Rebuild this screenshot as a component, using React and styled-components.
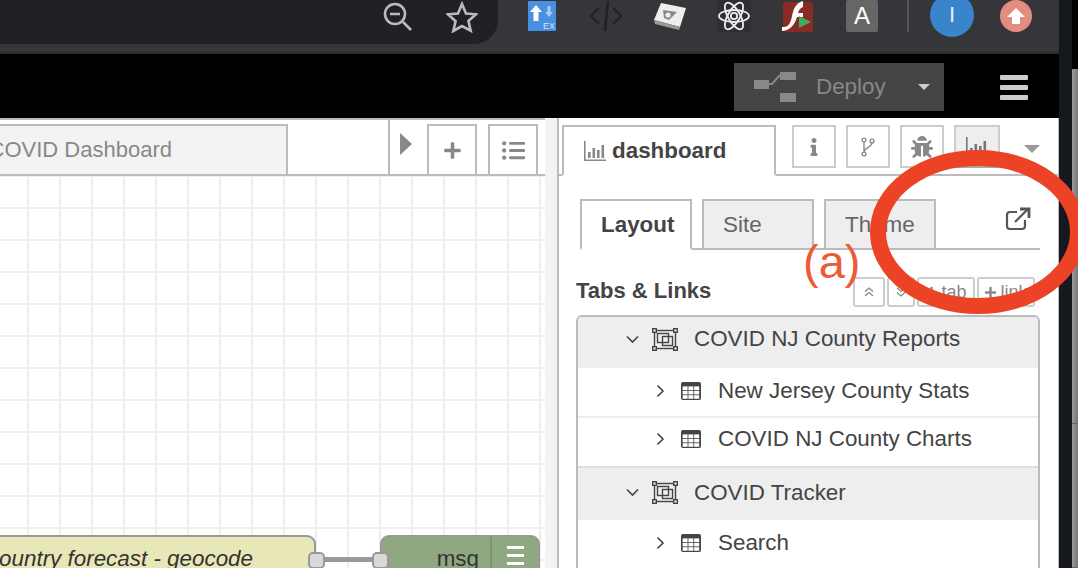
import React from 'react'
import styled, { createGlobalStyle } from 'styled-components'
import { FaPlus, FaListUl, FaInfo, FaBug } from 'react-icons/fa'

const GlobalStyle = createGlobalStyle`
  html, body { margin: 0; padding: 0; background: #15181d; }
  * { box-sizing: border-box; }
`

const Page = styled.div`
  position: relative;
  width: 1078px;
  height: 568px;
  overflow: hidden;
  display: flex;
  background: #15181d;
  font-family: "Liberation Sans", Arial, sans-serif;
`
const Window = styled.div`
  width: 1059px;
  height: 568px;
  flex: none;
  display: flex;
  flex-direction: column;
`
const WindowGap = styled.div`
  width: 13px;
  flex: none;
  background: #15181d;
`
const ScrollEdge = styled.div`
  flex: 1;
  display: flex;
  flex-direction: column;
  padding-top: 69px;
  background: #000;
`
const ScrollThumb = styled.div`
  height: ${p => p.$height}px;
  flex: none;
  border-bottom: 1px solid #666;
  background: linear-gradient(90deg, #9a9a9a, #777);
`

/* browser bar */
const ChromeBar = styled.div`
  height: 54px;
  flex: none;
  display: flex;
  align-items: flex-start;
  background: #35363a;
  border-bottom: 2px solid #2a2b2e;
  overflow: hidden;
`
const UrlPill = styled.div`
  width: 498px;
  height: 44px;
  flex: none;
  display: flex;
  justify-content: flex-end;
  gap: 32px;
  padding: 1px 20px 0 0;
  background: #202124;
  border-radius: 0 0 24px 0;
`
const PillIcon = styled.svg`
  width: 32px;
  height: 32px;
`
const ExtGroup = styled.div`
  margin-left: 12px;
  display: flex;
`
const ExtSlot = styled.div`
  width: 64px;
  height: 32px;
  display: flex;
  justify-content: center;
`
const ExtIcon = styled.svg`
  width: 34px;
  height: 34px;
`
const ExtLetter = styled.div`
  width: 32px;
  height: 32px;
  display: flex;
  align-items: center;
  justify-content: center;
  background: #666;
  border-radius: 2px;
  color: #fff;
  font-size: 24px;
`
const ChromeRule = styled.div`
  width: 2px;
  height: 32px;
  margin-left: 13px;
  background: #55565a;
`
const Avatar = styled.div`
  width: 44px;
  height: 44px;
  margin: -7px 0 0 21px;
  display: flex;
  align-items: center;
  justify-content: center;
  border-radius: 50%;
  background: #3a84cb;
  color: #e8f0f8;
  font-size: 22px;
`
const UpdateBadge = styled.div`
  width: 32px;
  height: 32px;
  margin-left: 26px;
  display: flex;
  align-items: center;
  justify-content: center;
  border-radius: 50%;
  background: #e38d80;
`

/* node-red header */
const Header = styled.div`
  height: 64px;
  flex: none;
  display: flex;
  align-items: center;
  justify-content: flex-end;
  padding-right: 31px;
  background: #000;
`
const Deploy = styled.div`
  width: 210px;
  height: 48px;
  margin: 2px 56px 0 0;
  display: flex;
  align-items: center;
  padding-left: 20px;
  background: #444;
  color: #888;
  font-size: 22.4px;
`
const DeployLabel = styled.span`
  margin-left: 20px;
  flex: 1;
`
const Caret = styled.span`
  display: block;
  width: 0;
  height: 0;
  margin-right: ${p => p.$right || 0}px;
  border-left: ${p => p.$size}px solid transparent;
  border-right: ${p => p.$size}px solid transparent;
  border-top: ${p => p.$size}px solid ${p => p.$color};
`
const Hamburger = styled.div`
  width: 28px;
  display: flex;
  flex-direction: column;
  gap: 5px;
  margin-top: 2px;
`
const HamburgerBar = styled.div`
  height: 5px;
  border-radius: 1px;
  background: #ccc;
`

/* body */
const Body = styled.div`
  flex: 1;
  display: flex;
  min-height: 0;
`
const Workspace = styled.div`
  position: relative;
  width: 545px;
  flex: none;
  display: flex;
  flex-direction: column;
  overflow: hidden;
  background: #fff;
`
const TabBar = styled.div`
  height: 58px;
  flex: none;
  display: flex;
  align-items: flex-end;
  background: #fff;
  border-top: 2px solid #bbb;
  border-bottom: 2px solid #bbb;
  padding-right: 7px;
`
const FlowTab = styled.div`
  width: 288px;
  height: 52px;
  margin-bottom: -2px;
  display: flex;
  align-items: center;
  justify-content: flex-end;
  padding: 0 114px 0 0;
  background: #f3f3f3;
  border: 2px solid #bbb;
  border-left: none;
  color: #888;
  font-size: 22px;
  white-space: nowrap;
  overflow: hidden;
`
const TabSpacer = styled.div`
  flex: 1;
`
const ScrollArrow = styled.div`
  width: 39px;
  height: 56px;
  display: flex;
  padding: 15px 0 0 10px;
  border-left: 2px solid #bbb;
`
const ArrowShape = styled.span`
  width: 0;
  height: 0;
  border-top: 11px solid transparent;
  border-bottom: 11px solid transparent;
  border-left: 12px solid #888;
`
const BarButton = styled.div`
  width: 50px;
  height: 50px;
  margin-right: ${p => p.$gap || 0}px;
  display: flex;
  align-items: center;
  justify-content: center;
  background: #fff;
  border: 2px solid #bbb;
  border-bottom: none;
  color: #888;
  font-size: 19px;
`
const Grid = styled.div`
  flex: 1;
  background-color: #fff;
  background-image:
    linear-gradient(#eee 2px, transparent 2px),
    linear-gradient(90deg, #eee 2px, transparent 2px);
  background-size: 32px 32px;
  background-position: 0 31px, 27px 0;
`

/* nodes sit on the flow canvas */
const Node = styled.div`
  position: absolute;
  top: 417px;
  left: ${p => p.$left}px;
  width: ${p => p.$width}px;
  height: 60px;
  display: flex;
  background: ${p => p.$bg};
  border: 2px solid #999;
  border-radius: 9px;
  color: #333;
  font-size: 22.4px;
`
const NodeText = styled.div`
  flex: 1;
  padding: 9px ${p => p.$right}px 0 0;
  text-align: right;
  font-style: ${p => (p.$italic ? 'italic' : 'normal')};
  white-space: nowrap;
`
const NodeButton = styled.div`
  width: 48px;
  flex: none;
  display: flex;
  flex-direction: column;
  align-items: center;
  gap: 5px;
  padding-top: 9px;
  border-left: 2px solid #7d9472;
`
const NodeButtonBar = styled.div`
  width: 17px;
  height: 3px;
  background: #fff;
`
const Port = styled.div`
  position: absolute;
  top: 434px;
  left: ${p => p.$left}px;
  width: 17px;
  height: 17px;
  background: #d9d9d9;
  border: 2px solid #999;
  border-radius: 5px;
`
const Wire = styled.div`
  position: absolute;
  top: 439px;
  left: 325px;
  width: 48px;
  height: 5px;
  background: #999;
`

const Gutter = styled.div`
  width: 12px;
  flex: none;
  background: #f3f3f3;
`

/* sidebar */
const Sidebar = styled.div`
  flex: 1;
  display: flex;
  flex-direction: column;
  min-width: 0;
  background: #fff;
  border-left: 2px solid #bbb;
  border-right: 1px solid #bbb;
  color: #444;
`
const SideTabs = styled.div`
  height: 58px;
  flex: none;
  display: flex;
  align-items: flex-end;
  padding-left: 3px;
  border-bottom: 2px solid #bbb;
`
const DashTab = styled.div`
  width: 214px;
  height: 51px;
  margin-bottom: -2px;
  display: flex;
  align-items: center;
  gap: 5px;
  padding-left: 19px;
  background: #fff;
  border: 2px solid #bbb;
  border-bottom: 2px solid #fff;
  font-size: 22.4px;
  font-weight: bold;
`
const SideIconButton = styled.div`
  width: ${p => p.$width || 44}px;
  height: 43px;
  margin: 0 0 6px ${p => p.$left}px;
  display: flex;
  align-items: center;
  justify-content: center;
  background: ${p => (p.$active ? '#eee' : '#fff')};
  border: 2px solid #ccc;
  border-bottom-color: ${p => (p.$active ? '#aaa' : '#ccc')};
  color: #888;
`
const SideCaret = styled.div`
  margin: 0 0 21px 24px;
`
const Panel = styled.div`
  flex: 1;
  min-height: 0;
  padding: 22px 18px 0 21px;
  overflow: hidden;
`
const SubTabs = styled.div`
  height: 52px;
  display: flex;
  align-items: flex-end;
  gap: 10px;
  border-bottom: 2px solid #bbb;
`
const SubTab = styled.div`
  width: 112px;
  height: 51px;
  margin-bottom: -2px;
  display: flex;
  align-items: center;
  padding-left: 19px;
  background: ${p => (p.$active ? '#fff' : '#eee')};
  border: 2px solid #bbb;
  border-bottom-color: ${p => (p.$active ? '#fff' : '#bbb')};
  color: ${p => (p.$active ? '#444' : '#666')};
  font-size: 22.4px;
  font-weight: ${p => (p.$active ? 'bold' : 'normal')};
`
const PopOut = styled.svg`
  width: 26px;
  height: 26px;
  margin: 0 9px 16px auto;
`
const SectionHead = styled.div`
  height: 65px;
  display: flex;
  align-items: flex-start;
  padding-top: 27px;
  margin-left: -4px;
`
const SectionTitle = styled.div`
  flex: 1;
  margin-top: 1px;
  font-size: 22px;
  font-weight: bold;
  line-height: 26px;
`
const SectionButtons = styled.div`
  display: flex;
  gap: 2px;
  margin-right: 5px;
`
const SmallButton = styled.div`
  width: ${p => p.$width}px;
  height: 30px;
  display: flex;
  align-items: center;
  justify-content: center;
  gap: 3px;
  background: #fff;
  border: 2px solid #ccc;
  border-radius: 3px;
  color: #888;
  font-size: 18px;
`
const Tree = styled.div`
  margin-left: -4px;
  height: 300px;
  border: 2px solid #bbb;
  border-bottom: none;
  border-radius: 6px 6px 0 0;
  overflow: hidden;
`
const GroupRow = styled.div`
  height: ${p => p.$height}px;
  display: flex;
  align-items: center;
  padding: 0 0 ${p => p.$lift}px 48px;
  background: #eee;
  border-top: ${p => (p.$first ? 'none' : '2px solid #ddd')};
  font-size: 22.4px;
`
const LeafRow = styled.div`
  height: ${p => p.$height}px;
  display: flex;
  align-items: center;
  padding: 0 0 ${p => p.$lift}px 78px;
  background: #fff;
  border-top: ${p => (p.$first ? 'none' : '2px solid #eee')};
  font-size: 22.4px;
`
const Chevron = styled.span`
  width: ${p => p.$width}px;
  flex: none;
  display: flex;
`
const RowLabel = styled.span`
  margin-left: ${p => p.$left}px;
`

/* annotation drawn over the screenshot */
const Annotation = styled.div`
  position: absolute;
  left: 803px;
  top: 234px;
  color: #ec5b3a;
  font-size: 47px;
  line-height: 56px;
`
const RedRing = styled.svg`
  position: absolute;
  left: 860px;
  top: 140px;
  width: 218px;
  height: 185px;
`

const ChartIcon = ({ color = '#888' }) => (
  <svg width="24" height="24" viewBox="0 0 24 24" fill={color}>
    <path d="M1 2h1.6v18.4H23V22H1z" />
    <rect x="5" y="13" width="2.6" height="6" />
    <rect x="9.5" y="9" width="2.6" height="10" />
    <rect x="14" y="11" width="2.6" height="8" />
    <rect x="18.5" y="6" width="2.6" height="13" />
  </svg>
)

const BranchIcon = () => (
  <svg width="14" height="20" viewBox="0 0 14 20" fill="none" stroke="#888" strokeWidth="1.4">
    <circle cx="3" cy="3" r="1.9" />
    <circle cx="11" cy="4" r="1.9" />
    <circle cx="3" cy="17" r="1.9" />
    <path d="M3 5v10M11 6c0 4-7 4-8 9" />
  </svg>
)

const GroupIcon = () => (
  <svg width="26" height="23" viewBox="0 0 26 23" fill="none" stroke="#444" strokeWidth="1.4">
    <rect x="2.500" y="2.500" width="21" height="18" />
    <rect x="5.500" y="5.500" width="11" height="9" />
    <rect x="10.500" y="8.500" width="10" height="9" />
    <rect x="0.700" y="0.700" width="3.600" height="3.600" fill="#eee" />
    <rect x="21.700" y="0.700" width="3.600" height="3.600" fill="#eee" />
    <rect x="0.700" y="18.700" width="3.600" height="3.600" fill="#eee" />
    <rect x="21.700" y="18.700" width="3.600" height="3.600" fill="#eee" />
  </svg>
)

const TableIcon = () => (
  <svg width="20" height="18" viewBox="0 0 20 18">
    <rect width="20" height="18" rx="2" fill="#444" />
    {[0, 1, 2].map(row =>
      [0, 1, 2].map(col => (
        <rect key={`${row}-${col}`} x={1.6 + col * 5.8} y={4.4 + row * 4.4} width="5" height="3.6" fill="#fff" />
      ))
    )}
  </svg>
)

const ChevronDown = () => (
  <svg width="13" height="9" viewBox="0 0 13 9" fill="none" stroke="#444" strokeWidth="1.600">
    <path d="M1 1.500l5.500 5.500L12 1.500" />
  </svg>
)

const ChevronRight = () => (
  <svg width="9" height="14" viewBox="0 0 9 14" fill="none" stroke="#444" strokeWidth="1.600">
    <path d="M1.500 1.500L7 7l-5.500 5.500" />
  </svg>
)

const DoubleChevron = ({ down }) => (
  <svg width="12" height="12" viewBox="0 0 12 12" fill="none" stroke="#888" strokeWidth="1.300">
    <path d={down ? 'M2 2l4 3.500L10 2M2 6.500l4 3.500 4-3.500' : 'M2 5.500L6 2l4 3.500M2 10l4-3.500L10 10'} />
  </svg>
)

const extensions = [
  <ExtIcon key="ex" viewBox="0 0 34 34">
    <rect x="3" y="1" width="28" height="30" rx="1" fill="#4a90e2" />
    <path d="M11 5l6 7h-3.500v9h-5v-9H5z" fill="#fff" />
    <path d="M22.500 6h3v6H28l-4 5-4-5h2.500z" fill="#a9cbf2" />
    <text x="18" y="29" fontSize="9" fill="#cfe2f8" fontFamily="Liberation Sans">EX</text>
  </ExtIcon>,
  <ExtIcon key="code" viewBox="0 0 34 34" fill="none" stroke="#202124" strokeWidth="2.400">
    <path d="M10 8L2 16l8 8M24 8l8 8-8 8M19 1l-3 30" />
  </ExtIcon>,
  <ExtIcon key="cube" viewBox="0 0 34 34">
    <path d="M8 3l25 5-6 19L1 20z" fill="#eee" />
    <path d="M1 20l26 7-1 3L2 24z" fill="#999" />
    <path d="M10 10l14 2-8 8-5-2z" fill="#888" />
    <circle cx="15" cy="15" r="2.600" fill="#eee" />
  </ExtIcon>,
  <ExtIcon key="react" viewBox="0 0 34 34" fill="none" stroke="#eee" strokeWidth="1.800">
    <rect x="0" y="0" width="34" height="32" fill="#2e2f33" stroke="none" />
    <ellipse cx="17" cy="16" rx="15" ry="6" />
    <ellipse cx="17" cy="16" rx="15" ry="6" transform="rotate(60 17 16)" />
    <ellipse cx="17" cy="16" rx="15" ry="6" transform="rotate(120 17 16)" />
    <circle cx="17" cy="16" r="3.200" />
  </ExtIcon>,
  <ExtIcon key="flash" viewBox="0 0 34 34">
    <rect x="2" y="2" width="30" height="30" rx="3" fill="#8a2a25" />
    <path d="M1 27c9 1 9-8 11-15 2-7 6-10 10-11v6c-3 1-4 3-5 6h5v4h-6c-2 7-6 13-15 14z" fill="#fff" />
    <path d="M18 16l12 6-12 6z" fill="#3fae5a" />
  </ExtIcon>,
  <ExtLetter key="a">A</ExtLetter>,
]

export default function App() {
  return (
    <Page>
      <GlobalStyle />
      <Window>
        <ChromeBar>
          <UrlPill>
            <PillIcon viewBox="0 0 32 32" fill="none" stroke="#bbb" strokeWidth="2.600">
              <circle cx="13" cy="13" r="10" />
              <path d="M8 13h10M21 21l8 8" />
            </PillIcon>
            <PillIcon viewBox="0 0 32 32" fill="none" stroke="#bbb" strokeWidth="2.600">
              <path d="M16 3l4 9.500 10 .8-7.600 6.600 2.300 9.800L16 25l-8.700 5 2.300-9.800L2 13.300l10-.8z" />
            </PillIcon>
          </UrlPill>
          <ExtGroup>
            {extensions.map((icon, i) => (
              <ExtSlot key={i}>{icon}</ExtSlot>
            ))}
          </ExtGroup>
          <ChromeRule />
          <Avatar>I</Avatar>
          <UpdateBadge>
            <svg width="20" height="20" viewBox="0 0 20 20" fill="#fff">
              <path d="M10 2l9 9h-5v7H6v-7H1z" />
            </svg>
          </UpdateBadge>
        </ChromeBar>

        <Header>
          <Deploy>
            <svg width="42" height="30" viewBox="0 0 42 30" fill="#888">
              <rect x="0" y="8" width="15" height="9" />
              <rect x="26" y="0" width="16" height="8" />
              <rect x="26" y="21" width="16" height="9" />
              <path d="M15 12h3l8-9" fill="none" stroke="#888" strokeWidth="2" />
            </svg>
            <DeployLabel>Deploy</DeployLabel>
            <Caret $right={14} $size={6.5} $color="#ccc" />
          </Deploy>
          <Hamburger>
            <HamburgerBar />
            <HamburgerBar />
            <HamburgerBar />
          </Hamburger>
        </Header>

        <Body>
          <Workspace>
            <TabBar>
              <FlowTab>COVID Dashboard</FlowTab>
              <TabSpacer />
              <ScrollArrow>
                <ArrowShape />
              </ScrollArrow>
              <BarButton $gap={11}>
                <FaPlus />
              </BarButton>
              <BarButton>
                <FaListUl size={23} />
              </BarButton>
            </TabBar>
            <Grid />
            <Node $left={-40} $width={356} $bg="#e8e7b8">
              <NodeText $italic $right={61}>country forecast - geocode</NodeText>
            </Node>
            <Node $left={380} $width={160} $bg="#8fa882">
              <NodeText $right={11}>msg</NodeText>
              <NodeButton>
                <NodeButtonBar />
                <NodeButtonBar />
                <NodeButtonBar />
              </NodeButton>
            </Node>
            <Wire />
            <Port $left={308} />
            <Port $left={372} />
          </Workspace>
          <Gutter />
          <Sidebar>
            <SideTabs>
              <DashTab>
                <ChartIcon />
                dashboard
              </DashTab>
              <SideIconButton $left={16}>
                <FaInfo size={18} />
              </SideIconButton>
              <SideIconButton $left={10}>
                <BranchIcon />
              </SideIconButton>
              <SideIconButton $left={10}>
                <FaBug size={22} />
              </SideIconButton>
              <SideIconButton $left={10} $width={46} $active>
                <ChartIcon color="#777" />
              </SideIconButton>
              <SideCaret>
                <Caret $size={8} $color="#999" />
              </SideCaret>
            </SideTabs>
            <Panel>
              <SubTabs>
                <SubTab $active>Layout</SubTab>
                <SubTab>Site</SubTab>
                <SubTab>Theme</SubTab>
                <PopOut viewBox="0 0 26 26" fill="none" stroke="#555" strokeWidth="2.200">
                  <path d="M12 6H5a3 3 0 0 0-3 3v11a3 3 0 0 0 3 3h12a3 3 0 0 0 3-3v-6" />
                  <path d="M10 16L23 3" />
                  <path d="M15 3h9v9" strokeWidth="2.800" />
                </PopOut>
              </SubTabs>
              <SectionHead>
                <SectionTitle>Tabs &amp; Links</SectionTitle>
                <SectionButtons>
                  <SmallButton $width={32}>
                    <DoubleChevron />
                  </SmallButton>
                  <SmallButton $width={28}>
                    <DoubleChevron down />
                  </SmallButton>
                  <SmallButton $width={58}>
                    <FaPlus size={13} />
                    tab
                  </SmallButton>
                  <SmallButton $width={58}>
                    <FaPlus size={13} />
                    link
                  </SmallButton>
                </SectionButtons>
              </SectionHead>
              <Tree>
                <GroupRow $height={51} $lift={7} $first>
                  <Chevron $width={26}>
                    <ChevronDown />
                  </Chevron>
                  <GroupIcon />
                  <RowLabel $left={16}>COVID NJ County Reports</RowLabel>
                </GroupRow>
                <LeafRow $height={48} $lift={2} $first>
                  <Chevron $width={25}>
                    <ChevronRight />
                  </Chevron>
                  <TableIcon />
                  <RowLabel $left={17}>New Jersey County Stats</RowLabel>
                </LeafRow>
                <LeafRow $height={50} $lift={6}>
                  <Chevron $width={25}>
                    <ChevronRight />
                  </Chevron>
                  <TableIcon />
                  <RowLabel $left={17}>COVID NJ County Charts</RowLabel>
                </LeafRow>
                <GroupRow $height={54} $lift={3}>
                  <Chevron $width={26}>
                    <ChevronDown />
                  </Chevron>
                  <GroupIcon />
                  <RowLabel $left={16}>COVID Tracker</RowLabel>
                </GroupRow>
                <LeafRow $height={48} $lift={2} $first>
                  <Chevron $width={25}>
                    <ChevronRight />
                  </Chevron>
                  <TableIcon />
                  <RowLabel $left={17}>Search</RowLabel>
                </LeafRow>
              </Tree>
            </Panel>
          </Sidebar>
        </Body>
      </Window>
      <WindowGap />
      <ScrollEdge>
        <ScrollThumb $height={355} />
        <ScrollThumb $height={144} />
      </ScrollEdge>
      <Annotation>(a)</Annotation>
      <RedRing viewBox="0 0 218 185" fill="none" stroke="#ec4225" strokeWidth="16">
        <ellipse cx="118" cy="92" rx="100" ry="74" />
      </RedRing>
    </Page>
  )
}
